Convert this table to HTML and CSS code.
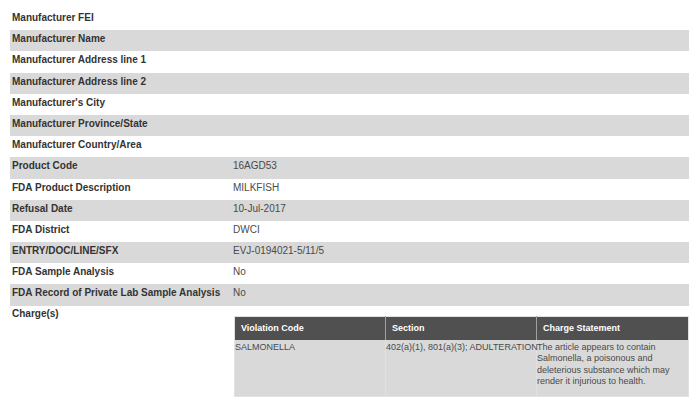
FILE: index.html
```html
<!DOCTYPE html>
<html>
<head>
<meta charset="utf-8">
<link rel="stylesheet" href="styles.css">
</head>
<body>
<div class="page">
  <table class="details">
    <tr><th>Manufacturer FEI</th><td></td></tr>
    <tr><th>Manufacturer Name</th><td></td></tr>
    <tr><th>Manufacturer Address line 1</th><td></td></tr>
    <tr><th>Manufacturer Address line 2</th><td></td></tr>
    <tr><th>Manufacturer's City</th><td></td></tr>
    <tr><th>Manufacturer Province/State</th><td></td></tr>
    <tr><th>Manufacturer Country/Area</th><td></td></tr>
    <tr><th>Product Code</th><td>16AGD53</td></tr>
    <tr><th>FDA Product Description</th><td>MILKFISH</td></tr>
    <tr><th>Refusal Date</th><td>10-Jul-2017</td></tr>
    <tr><th>FDA District</th><td>DWCI</td></tr>
    <tr><th>ENTRY/DOC/LINE/SFX</th><td>EVJ-0194021-5/11/5</td></tr>
    <tr><th>FDA Sample Analysis</th><td>No</td></tr>
    <tr><th>FDA Record of Private Lab Sample Analysis</th><td>No</td></tr>
    <tr class="charges-row">
      <th>Charge(s)</th>
      <td>
        <table class="charges">
          <thead>
            <tr><th class="c1">Violation Code</th><th class="c2">Section</th><th class="c3">Charge Statement</th></tr>
          </thead>
          <tbody>
            <tr>
              <td>SALMONELLA</td>
              <td class="nowrap">402(a)(1), 801(a)(3); ADULTERATION</td>
              <td>The article appears to contain Salmonella, a poisonous and deleterious substance which may render it injurious to health.</td>
            </tr>
          </tbody>
        </table>
      </td>
    </tr>
  </table>
</div>
</body>
</html>
```
FILE: styles.css
```css
html, body {
  margin: 0;
  padding: 0;
  background: #ffffff;
}
.page {
  padding: 9px 7px 0 10px;
  font-family: Arial, "Liberation Sans", Helvetica, sans-serif;
}
.details {
  width: 679px;
  border-collapse: collapse;
  table-layout: fixed;
}
.details > tbody > tr > th,
.details > tbody > tr > td {
  height: 21.2px;
  padding: 3px 0 0 2px;
  font-size: 10px;
  line-height: 11.5px;
  vertical-align: top;
  box-sizing: border-box;
  text-align: left;
}
.details > tbody > tr > th {
  width: 223px;
  font-weight: bold;
  color: #333333;
}
.details > tbody > tr > td {
  color: #4a4a4a;
  padding-left: 0;
}
.details > tbody > tr:nth-child(even) {
  background: #d9d9d9;
}
.details > tbody > tr.charges-row {
  background: #ffffff;
}
.details > tbody > tr.charges-row > th {
  padding-top: 2px;
}
.details > tbody > tr.charges-row > td {
  padding: 10px 0 0 1px;
}
.charges {
  width: 455px;
  border-collapse: collapse;
  table-layout: fixed;
  border: 1px solid #e2e2e2;
}
.charges th {
  background: #505050;
  color: #ffffff;
  font-size: 9px;
  font-weight: bold;
  text-align: left;
  height: 24px;
  padding: 1px 0 0 6px;
  box-sizing: border-box;
  border-left: 1px solid #a0a0a0;
}
.charges th.c1 { width: 151px; border-left: none; }
.charges th.c2 { width: 151px; }
.charges td {
  background: #d9d9d9;
  color: #4a4a4a;
  font-size: 9px;
  line-height: 11.3px;
  vertical-align: top;
  padding: 2px 0 0 0;
  height: 56px;
  box-sizing: border-box;
  border-left: 1px solid #e0e0e0;
}
.charges td:first-child { border-left: none; }
.charges td.nowrap { white-space: nowrap; }
```
